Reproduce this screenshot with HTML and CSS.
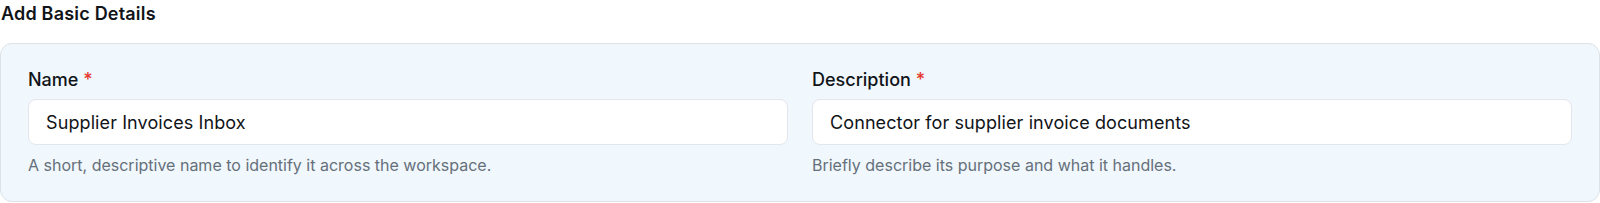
FILE: index.html
```html
<!DOCTYPE html>
<html>
<head>
  <title>Add Basic Details</title>
  <link rel="stylesheet" href="styles.css">
</head>
<body>
  <h2 class="page-title">Add Basic Details</h2>
  <div class="details-card">
    <div class="field">
      <label class="field-label">Name <span class="required">*</span></label>
      <input class="field-input" type="text" value="Supplier Invoices Inbox">
      <p class="field-hint">A short, descriptive name to identify it across the workspace.</p>
    </div>
    <div class="field">
      <label class="field-label">Description <span class="required">*</span></label>
      <input class="field-input" type="text" value="Connector for supplier invoice documents">
      <p class="field-hint">Briefly describe its purpose and what it handles.</p>
    </div>
  </div>
</body>
</html>
```

FILE: styles.css
```css
body {
  margin: 0;
  font-family: Inter, "Noto Sans", sans-serif;
  color: #111418;
  background: #ffffff;
}
.page-title {
  margin: 0;
  padding: 3px 0 0 1px;
  font-size: 18px;
  font-weight: 600;
  line-height: 22px;
  letter-spacing: 0.2px;
}
.details-card {
  margin-top: 18px;
  display: grid;
  grid-template-columns: 1fr 1fr;
  gap: 24px;
  padding: 24px 27px 26px 27px;
  background-color: #f0f7fd;
  border: 1px solid #dde2e7;
  border-radius: 12px;
}
.field {
  display: flex;
  flex-direction: column;
}
.field-label {
  font-size: 18px;
  font-weight: 500;
  line-height: 24px;
  margin-bottom: 7px;
}
.required {
  color: #e5372b;
}
.field-input {
  height: 46px;
  box-sizing: border-box;
  padding: 0 17px;
  font-family: inherit;
  font-size: 18px;
  letter-spacing: 0.1px;
  color: #111418;
  background: #ffffff;
  border: 1px solid #e3e6ea;
  border-radius: 8px;
  outline: none;
}
.field-hint {
  margin: 10px 0 0 0;
  font-size: 16px;
  line-height: 20px;
  color: #66707a;
}
```
